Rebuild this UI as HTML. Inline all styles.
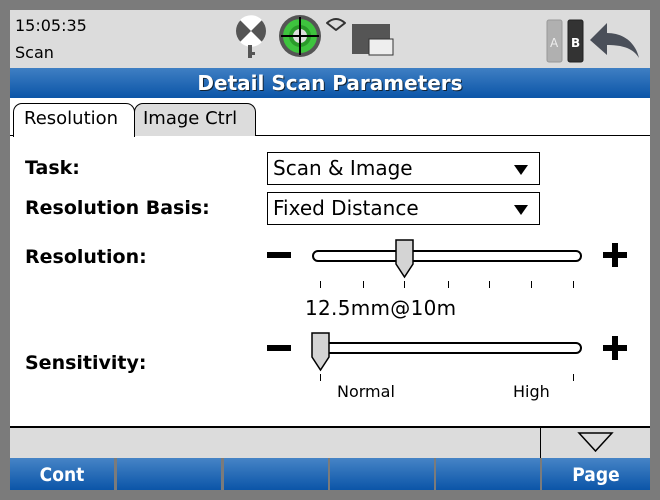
<!DOCTYPE html>
<html><head><style>
*{margin:0;padding:0;box-sizing:border-box}
body{width:660px;height:500px;background:#7b7b7b;position:relative;overflow:hidden;font-family:"DejaVu Sans","Liberation Sans",sans-serif}
.a{position:absolute}
#status{left:10px;top:10px;width:640px;height:58px;background:#dcdcdc}
#title{left:10px;top:68px;width:640px;height:30px;background:linear-gradient(#3f7fc3,#0b55a8);color:#fff;font-weight:bold;font-size:20px;text-align:center;line-height:30px;font-family:"DejaVu Sans",sans-serif;text-shadow:1px 1px 0 #123}
#main{left:10px;top:98px;width:640px;height:329px;background:#fff}
.tab{top:103px;height:33px;border:1px solid #000;border-bottom:none;border-radius:9px 9px 0 0;font-size:18px;line-height:30px;padding:0 10px;font-family:"DejaVu Sans",sans-serif}
.lbl{left:25px;font-weight:bold;font-size:19px;font-family:"DejaVu Sans",sans-serif}
.dd{left:267px;width:273px;height:33px;border:1px solid #000;font-size:20px;line-height:31px;padding-left:5px;font-family:"DejaVu Sans",sans-serif}
.dd:after{content:"";position:absolute;right:11px;top:12px;border-left:7px solid transparent;border-right:7px solid transparent;border-top:10px solid #000}
.track{left:312px;width:270px;height:12px;border:2px solid #000;border-radius:6px;background:#fff}
.tick{width:1px;height:7px;background:#000}
.btn{top:458px;height:32px;width:104px;background:linear-gradient(#4684c6,#0b55a8);color:#fff;font-weight:bold;font-size:19px;text-align:center;line-height:34px;font-family:"DejaVu Sans Condensed","DejaVu Sans",sans-serif}
</style></head><body>
<div id="status" class="a"></div>
<div class="a" style="left:15px;top:16px;font-size:16px">15:05:35</div>
<div class="a" style="left:15px;top:43px;font-size:16px">Scan</div>
<svg class="a" style="left:230px;top:12px" width="170" height="50">
<circle cx="21" cy="19" r="15" fill="#555"/><path d="M21 19 L10 8 A15 15 0 0 1 32 8Z M21 19 L10 30 A15 15 0 0 0 32 30Z" fill="#fff"/>
<rect x="18" y="33" width="4" height="13" fill="#555"/><rect x="18" y="40" width="7" height="3" fill="#555"/>
<circle cx="70" cy="24" r="21" fill="#555"/><circle cx="70" cy="24" r="17" fill="#3ec43e"/><circle cx="70" cy="24" r="11" fill="#2a9a2a"/><circle cx="70" cy="24" r="7" fill="#ddd"/>
<path d="M70 5V43M51 24H89" stroke="#000" stroke-width="2"/>
<path d="M97 11Q106 3 115 11L106 18Z" fill="none" stroke="#333" stroke-width="2" stroke-linejoin="round"/>
<rect x="122" y="12" width="38" height="30" fill="#555"/><rect x="139" y="27" width="24" height="16" fill="#eee" stroke="#333"/>
</svg>
<svg class="a" style="left:545px;top:16px" width="100" height="48">
<rect x="2" y="4" width="15" height="42" fill="#b0b0b0" stroke="#999" rx="2"/><text x="5" y="31" font-size="12" fill="#eee" font-family="DejaVu Sans">A</text>
<rect x="23" y="4" width="15" height="42" fill="#333" stroke="#222" rx="2"/><text x="26" y="31" font-size="12" fill="#fff" font-weight="bold" font-family="DejaVu Sans">B</text>
<path d="M45 24L62 7V17C77 17 90 25 94 42C88 32 77 29 62 29V39Z" fill="#4a4f59"/>
</svg>
<div id="title" class="a">Detail Scan Parameters</div>
<div id="main" class="a"></div>
<div class="a" style="left:10px;top:135px;width:640px;height:1px;background:#000"></div>
<div class="a tab" style="left:134px;width:122px;background:#dcdcdc;padding:0 8px">Image Ctrl</div>
<div class="a tab" style="left:13px;width:122px;background:#fff;height:34px">Resolution</div>
<div class="lbl a" style="top:157px">Task:</div>
<div class="lbl a" style="top:197px">Resolution Basis:</div>
<div class="lbl a" style="top:246px">Resolution:</div>
<div class="lbl a" style="top:352px">Sensitivity:</div>
<div class="dd a" style="top:152px">Scan &amp; Image</div>
<div class="dd a" style="top:192px">Fixed Distance</div>
<div class="a" style="left:267px;top:252px;width:24px;height:6px;background:#000"></div>
<div class="a" style="left:603px;top:252px;width:24px;height:6px;background:#000"></div>
<div class="a" style="left:612px;top:243px;width:6px;height:24px;background:#000"></div>
<div class="a" style="left:267px;top:345px;width:24px;height:6px;background:#000"></div>
<div class="a" style="left:603px;top:345px;width:24px;height:6px;background:#000"></div>
<div class="a" style="left:612px;top:336px;width:6px;height:24px;background:#000"></div>
<div class="a track" style="top:250px"></div>
<div class="a track" style="top:342px"></div>
<svg class="a" style="left:395px;top:239px" width="20" height="40"><path d="M1 1H18V25L9.5 38L1 25Z" fill="#d4d4d4" stroke="#000" stroke-width="1.5"/></svg>
<svg class="a" style="left:311px;top:332px" width="20" height="40"><path d="M1 1H18V25L9.5 38L1 25Z" fill="#d4d4d4" stroke="#000" stroke-width="1.5"/></svg>
<div class="a tick" style="left:320px;top:281px"></div><div class="a tick" style="left:363px;top:281px"></div><div class="a tick" style="left:404px;top:281px"></div><div class="a tick" style="left:448px;top:281px"></div><div class="a tick" style="left:489px;top:281px"></div><div class="a tick" style="left:531px;top:281px"></div><div class="a tick" style="left:573px;top:281px"></div>
<div class="a tick" style="left:320px;top:374px"></div><div class="a tick" style="left:573px;top:374px"></div>
<div class="a" style="left:305px;top:296px;font-size:20px;font-family:'DejaVu Sans',sans-serif;letter-spacing:0.3px">12.5mm@10m</div>
<div class="a" style="left:337px;top:382px;font-size:16px;font-family:'DejaVu Sans',sans-serif">Normal</div>
<div class="a" style="left:513px;top:382px;font-size:16px;font-family:'DejaVu Sans',sans-serif">High</div>
<div class="a" style="left:10px;top:426px;width:640px;height:2px;background:#000"></div>
<div class="a" style="left:10px;top:428px;width:640px;height:30px;background:#dcdcdc"></div>
<div class="a" style="left:540px;top:428px;width:1px;height:30px;background:#000"></div>
<svg class="a" style="left:577px;top:431px" width="38" height="22"><path d="M2 2H35L18.5 20Z" fill="none" stroke="#000" stroke-width="1.5"/></svg>
<div class="a btn" style="left:10px">Cont</div>
<div class="a btn" style="left:117px"></div>
<div class="a btn" style="left:224px"></div>
<div class="a btn" style="left:330px"></div>
<div class="a btn" style="left:436px"></div>
<div class="a btn" style="left:542px;width:108px">Page</div>
</body></html>
